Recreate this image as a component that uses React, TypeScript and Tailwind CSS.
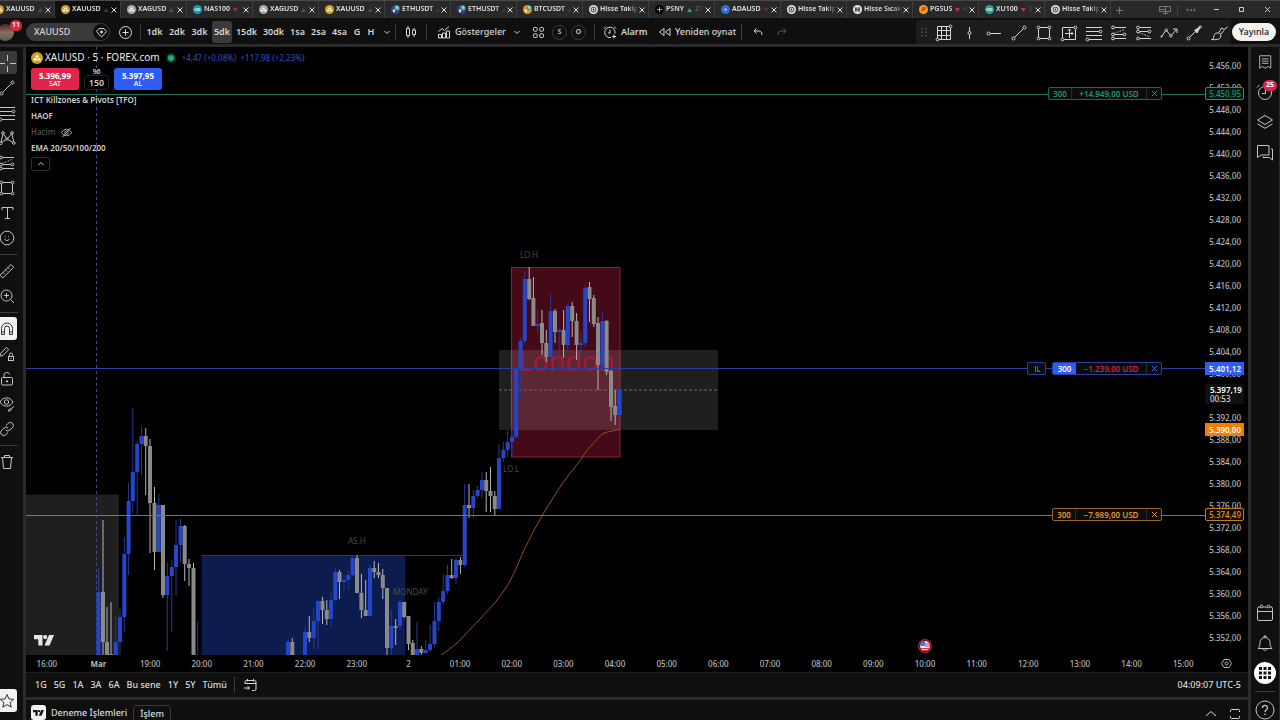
import type { ReactNode } from "react";

type IconProps = { size?: string; box?: string; children: ReactNode };

function Icon({ size = "size-[18px]", box = "0 0 18 18", children }: IconProps) {
  return (
    <svg className={`${size} shrink-0`} viewBox={box} fill="none" stroke="currentColor" strokeWidth="1" aria-hidden="true">
      {children}
    </svg>
  );
}

/* ---------- drawing tool icons ---------- */

const Node = ({ x, y, r = 1.4 }: { x: number; y: number; r?: number }) => <circle cx={x} cy={y} r={r} fill="#161616" />;

const LineIcon = () => (
  <Icon>
    <path d="M4.6 13.4 13.4 4.6" />
    <Node x={3.5} y={14.5} r={1.5} />
    <Node x={14.5} y={3.5} r={1.5} />
  </Icon>
);
const LevelsIcon = () => (
  <Icon>
    <path d="M1 3.500h16M1 7.500h14M1 11.500h16M3 15.500h14" />
    <Node x={15.500} y={7.500} />
    <Node x={2.500} y={15.500} />
  </Icon>
);
const PatternIcon = () => (
  <Icon>
    <path d="M2.800 14 5 4.500l4 5.500 5-5.500 1.800 9.500L9 10z" />
    <Node x={2.800} y={14.300} r={1.300} />
    <Node x={5} y={4} r={1.300} />
    <Node x={14} y={4} r={1.300} />
    <Node x={15.800} y={14} r={1.300} />
    <Node x={9} y={10} r={1.100} />
  </Icon>
);
const ForecastIcon = () => (
  <Icon>
    <path d="M4 3.500h12M4 10.500h9.500M4 14.500h12" />
    <path d="M4 9.500 14 5.500" strokeDasharray="1.5 1.5" />
    <Node x={3} y={3.500} />
    <Node x={3} y={10.500} />
    <Node x={3} y={14.500} />
    <Node x={14.500} y={10.500} />
  </Icon>
);
const ForecastDownIcon = () => (
  <Icon>
    <path d="M4 3.500h12M5 7.500h9M4 14.500h12" />
    <path d="M4 8.500 14 12.500" strokeDasharray="1.5 1.5" />
    <Node x={3} y={3.500} />
    <Node x={3} y={7.500} />
    <Node x={14.500} y={7.500} />
    <Node x={3} y={14.500} />
  </Icon>
);
const RectIcon = () => (
  <Icon>
    <rect x="3.500" y="3.500" width="11" height="11" />
    <Node x={3.500} y={3.500} />
    <Node x={14.500} y={3.500} />
    <Node x={3.500} y={14.500} />
    <Node x={14.500} y={14.500} />
  </Icon>
);
const GridIcon = () => (
  <Icon>
    <path d="M2.500 2.500h13v13h-13zM2.500 6.500h13M2.500 11.500h13M6.500 2.500v13M11.500 2.500v13" />
    <Node x={15.500} y={2.500} />
    <Node x={2.500} y={15.500} />
  </Icon>
);
const VLineIcon = () => (
  <Icon>
    <path d="M9.500 3v4.500M9.500 10.500V15" />
    <Node x={9.500} y={9} r={1.500} />
  </Icon>
);
const HRayIcon = () => (
  <Icon>
    <path d="M5 9.500h11" />
    <Node x={3.500} y={9.500} r={1.500} />
  </Icon>
);
const RangeIcon = () => (
  <Icon>
    <path d="M2.500 3.500h13v12h-13zM9.500 5v9M5 9.500h8M8 6.500 9.500 5 11 6.500M11.500 8l1.500 1.500-1.500 1.500" />
    <Node x={15.500} y={3.500} />
    <Node x={2.500} y={15.500} />
  </Icon>
);
const PolyIcon = () => (
  <Icon>
    <path d="M1.500 12.500 5.500 7M6.800 7l3.500 4M11.500 11l5-5.500M13 5h4v4" />
    <Node x={6.200} y={6.200} r={1.200} />
    <Node x={10.800} y={11.800} r={1.200} />
    <circle cx="1.500" cy="12.500" r="0.600" />
  </Icon>
);
const ArrowIcon = () => (
  <Icon>
    <path d="M4.600 13.400 12 6" />
    <Node x={3.500} y={14.500} r={1.500} />
    <path d="m9.500 6.500 6-4-3.500 6.500z" fill="currentColor" />
    <Node x={15.200} y={3} r={1.100} />
  </Icon>
);
const BrushIcon = () => (
  <Icon>
    <path d="M1.500 15.500c2 0 2-1.500 2.500-4 .5-2 2.500-3 4.500-2.500s3 2.500 2 4.500c-1.300 2.200-4 2.500-9 2z" />
    <path d="M9 8.500 11.500 4l2.500 1.500L17.500 3M10.500 10.500 14 6.500" />
  </Icon>
);
const CrossIcon = () => (
  <Icon>
    <path d="M9.500 1v6M9.500 12v6M1 9.500h6M12 9.500h6" />
  </Icon>
);
const TextIcon = () => (
  <Icon>
    <path d="M4 6V3.500h11V6M9.500 3.500v11M7 14.500h5" />
  </Icon>
);
const SmileIcon = () => (
  <Icon>
    <circle cx="9" cy="9" r="6.800" />
    <path d="M6.800 9.800c.3 2.300 4.100 2.300 4.400 0" />
    <path d="M7 7.500h.6M10.400 7.500h.6" strokeWidth="1.500" />
  </Icon>
);
const RulerIcon = () => (
  <Icon>
    <path d="m2 13.200 11-10.700 2.700 2.700L4.700 16zM5 10.500l1.500 1.500M7.500 8 9 9.500M10 5.500 11.500 7" />
  </Icon>
);
const ZoomIcon = () => (
  <Icon>
    <circle cx="8.500" cy="8.500" r="5.500" />
    <path d="m12.500 12.500 3.500 3.500M8.500 6v5M6 8.500h5" />
  </Icon>
);
const MagnetIcon = () => (
  <Icon>
    <path d="M3.500 14.500v-6a5.500 5.500 0 0 1 11 0v6h-3v-6a2.500 2.500 0 0 0-5 0v6zM3.500 12h3M11.500 12h3" />
  </Icon>
);
const PenLockIcon = () => (
  <Icon>
    <path d="m2 11 .5-2.700 6-5.800 2.200 2L5 10.600zM11.500 11.500v-2a1.500 1.500 0 0 1 3 0v2" />
    <rect x="10.500" y="11.500" width="5" height="4" />
    <path d="M13 13v1" />
  </Icon>
);
const UnlockIcon = () => (
  <Icon>
    <rect x="3.500" y="7.500" width="11" height="7.500" rx="1" />
    <path d="M6 7.500V5a2.800 2.800 0 0 1 5.500-.5" />
    <path d="M9 10.500v1.800" strokeWidth="2" />
  </Icon>
);
const EyeBrushIcon = () => (
  <Icon>
    <path d="M2 7c3-5.500 10-5.500 13 0-3 5.500-10 5.500-13 0z" />
    <circle cx="8.500" cy="7" r="2.200" />
    <path d="M10 16c1 0 1-2.500 2.500-2.500S14 16 10 16zM13.500 13.500l2.500-2" />
  </Icon>
);
const LinkIcon = () => (
  <Icon>
    <path d="m8 5.500 2.300-2.200a2.800 2.800 0 0 1 4.200 4.200L11.800 10a2.800 2.800 0 0 1-4 0M10 12.500l-2.300 2.200a2.800 2.800 0 0 1-4.200-4.200L6.200 8a2.800 2.800 0 0 1 4 0" />
  </Icon>
);
const TrashIcon = () => (
  <Icon>
    <path d="M3 4.500h12M6.500 4.500v-2h5v2M4.500 4.500l1 11h7l1-11" />
  </Icon>
);
const StarIcon = () => (
  <Icon>
    <path d="m9 2.500 1.900 4.400 4.800.4-3.600 3.200 1.100 4.700L9 12.700l-4.200 2.500 1.100-4.700-3.600-3.200 4.800-.4z" />
  </Icon>
);
const Chevron = () => (
  <Icon size="size-2" box="0 0 8 8">
    <path d="m1.500 3 2.500 2.500L6.500 3" />
  </Icon>
);

/* ---------- window tabs ---------- */

type Tab = { title: string; mark: string; trend?: "up" | "down"; extra?: string; glyph: string };

const tabs: Tab[] = [
  { title: "XAUUSD", mark: "bg-[#d4a017]", trend: "up", glyph: "gold" },
  { title: "XAUUSD", mark: "bg-[#d4a017]", trend: "up", glyph: "gold" },
  { title: "XAGUSD", mark: "bg-[#a9a9ad]", trend: "up", glyph: "gold" },
  { title: "NAS100", mark: "bg-[#119bb5]", trend: "down", glyph: "index" },
  { title: "XAGUSD", mark: "bg-[#a9a9ad]", trend: "up", glyph: "gold" },
  { title: "XAUUSD", mark: "bg-[#d4a017]", trend: "up", glyph: "gold" },
  { title: "ETHUSDT", mark: "bg-[#3c3f8c]", trend: "up", glyph: "pair" },
  { title: "ETHUSDT", mark: "bg-[#3c3f8c]", trend: "up", glyph: "pair" },
  { title: "BTCUSDT", mark: "bg-[#f7931a]", trend: "up", glyph: "pair" },
  { title: "Hisse Takip", mark: "bg-[#e6e6e6]", glyph: "ring" },
  { title: "PSNY", mark: "bg-black", trend: "up", extra: "23", glyph: "star" },
  { title: "ADAUSD", mark: "bg-[#2f6fd0]", trend: "down", glyph: "dot" },
  { title: "Hisse Takip", mark: "bg-[#e6e6e6]", glyph: "ring" },
  { title: "Hisse Sıcak", mark: "bg-[#e6e6e6]", glyph: "bars" },
  { title: "PGSUS", mark: "bg-[#f5a11c]", trend: "down", extra: "4", glyph: "flag" },
  { title: "XU100", mark: "bg-[#2b9c9c]", trend: "down", extra: "2", glyph: "index" },
  { title: "Hisse Takip", mark: "bg-[#e6e6e6]", glyph: "ring" },
];

function Glyph({ kind }: { kind: string }) {
  return (
    <svg className="size-full" viewBox="0 0 10 10" fill="none" aria-hidden="true">
      {kind === "gold" && <path d="m1.800 7 1-2h1.700l.7 2zM5.400 7 6 5h1.500l.9 2zM3.500 4.500l.7-1.700h1.700l.7 1.700z" fill="#fff" />}
      {kind === "index" && <path d="M2 3.800v2.400M3.300 3.900h1.500v2.200H3.300zM6 3.900h1.600v2.200H6z" stroke="#fff" strokeWidth="0.700" />}
      {kind === "pair" && (
        <>
          <circle cx="6.800" cy="3" r="3" fill="#3aa78e" />
          <path d="M5.500 2.200h2.800M6.900 2.200v2.500" stroke="#fff" strokeWidth="0.800" />
          <path d="m3.300 4.500 1.400 2-1.400 2-1.400-2z" fill="#fff" />
        </>
      )}
      {kind === "ring" && (
        <>
          <circle cx="5" cy="5" r="2.800" stroke="#222" />
          <circle cx="5" cy="5" r="1" fill="#222" />
        </>
      )}
      {kind === "bars" && <path d="M2.500 3.500h5M2.500 5h5M2.500 6.500h5M3 2.500v5M7 2.500v5" stroke="#222" strokeWidth="0.800" />}
      {kind === "star" && <path d="M5 2v6M2 5h6" stroke="#ddd" strokeWidth="0.800" />}
      {kind === "dot" && <circle cx="5" cy="5" r="1.500" fill="#9fc3f5" />}
      {kind === "flag" && <path d="m3.200 7.500 1-4.500h2.600l-.6 2.200H4.500" stroke="#c8202f" strokeWidth="1.200" />}
    </svg>
  );
}

function TabBar() {
  return (
    <header className="flex h-[18px] shrink-0 border-t border-[#484848] bg-[#292929] text-[7px] text-[#e0e0e0]">
      <nav className="-ml-[11px] flex" aria-label="Sekmeler">
        {tabs.map((t, i) => (
          <div
            key={i}
            className={`flex w-[66px] items-center border-r border-[#3d3d3d] pl-[6px] ${i === 1 ? "bg-[#0f0f0f]" : ""}`}
          >
            <span className={`size-[9px] shrink-0 overflow-hidden rounded-full ${t.mark}`}>
              <Glyph kind={t.glyph} />
            </span>
            <span className="ml-[2px] flex w-[37px] items-center font-semibold whitespace-nowrap [mask-image:linear-gradient(to_right,black_75%,transparent_105%)]">
              {t.title}
              {t.trend && (
                <svg
                  className={`ml-[3px] h-1 w-[5px] shrink-0 ${t.trend === "up" ? "text-[#22ab7a]" : "text-[#e0244c]"}`}
                  viewBox="0 0 5 4"
                  fill="currentColor"
                  aria-hidden="true"
                >
                  <path d={t.trend === "up" ? "M0 4h5L2.500 0z" : "M0 0h5L2.500 4z"} />
                </svg>
              )}
              {t.extra && <span className="ml-[3px] font-normal text-[#999]">{t.extra}</span>}
            </span>
            <button className="ml-[1px] flex" aria-label="Kapat">
              <Icon size="size-2" box="0 0 8 8">
                <path d="m1.500 1.500 5 5M6.500 1.500l-5 5" />
              </Icon>
            </button>
          </div>
        ))}
      </nav>
      <button className="flex w-4 items-center justify-center text-[#777]" aria-label="Yeni sekme">
        <Icon size="size-2" box="0 0 8 8">
          <path d="M4.500 1v7M1 4.500h7" />
        </Icon>
      </button>
      <div className="ml-auto flex items-center text-[#777]">
        <button className="flex w-[25px] justify-center border-r border-[#444]" aria-label="Düzen">
          <Icon size="h-[10px] w-3" box="0 0 12 10">
            <path d="M.5 1.500h11v5H.5zM6.500 1.500v8M4 8.500h5M.5 4.500h6" />
          </Icon>
        </button>
        <button className="flex w-[26px] justify-center" aria-label="Menü">
          <Icon size="h-1 w-[10px]" box="0 0 10 4">
            <circle cx="1.500" cy="2" r="0.800" />
            <circle cx="5" cy="2" r="0.800" />
            <circle cx="8.500" cy="2" r="0.800" />
          </Icon>
        </button>
        <button className="flex w-[25px] justify-center text-[#ccc]" aria-label="Küçült">
          <Icon size="size-[7px]" box="0 0 7 7">
            <path d="M1 3.500h5" />
          </Icon>
        </button>
        <button className="flex w-[25px] justify-center text-[#ccc]" aria-label="Büyüt">
          <Icon size="size-[7px]" box="0 0 7 7">
            <path d="M1.500 1.500h4v4h-4z" />
          </Icon>
        </button>
        <button className="flex w-[26px] justify-center text-[#ccc]" aria-label="Pencereyi kapat">
          <Icon size="size-[7px]" box="0 0 7 7">
            <path d="m1 1 5 5M6 1 1 6" />
          </Icon>
        </button>
      </div>
    </header>
  );
}

/* ---------- top toolbar ---------- */

const intervals: [string, string][] = [
  ["1dk", "w-[23px]"],
  ["2dk", "w-[22px]"],
  ["3dk", "w-[23px]"],
  ["5dk", "w-5 mx-[1px]"],
  ["15dk", "w-[27px]"],
  ["30dk", "w-[27px]"],
  ["1sa", "w-[21px]"],
  ["2sa", "w-[21px]"],
  ["4sa", "w-[21px]"],
  ["G", "w-[14px]"],
  ["H", "w-[14px]"],
];

const Sep = () => <span className="h-4 w-px shrink-0 bg-[#3d3d3d]" />;

const stripIcons: [string, () => ReactNode][] = [
  ["Izgara", GridIcon],
  ["Dikey çizgi", VLineIcon],
  ["Yatay ışın", HRayIcon],
  ["Trend çizgisi", LineIcon],
  ["Dikdörtgen", RectIcon],
  ["Fiyat aralığı", RangeIcon],
  ["Seviyeler", LevelsIcon],
  ["Uzun pozisyon", ForecastIcon],
  ["Kısa pozisyon", ForecastDownIcon],
  ["Yol", PolyIcon],
  ["Ok", ArrowIcon],
  ["Fırça", BrushIcon],
];

function Toolbar() {
  return (
    <div className="flex h-[29px] shrink-0 items-center border-b-[3px] border-[#2b2b2b] bg-[#0f0f0f] pt-[2px] text-[9px] font-semibold text-[#d6d6d6]">
      <div className="relative h-full w-[26px] shrink-0">
        <span className="absolute top-[4px] -left-[3px] size-[17px] rounded-full bg-gradient-to-b from-[#3d2a26] via-[#8f6b60] to-[#53605a]" />
        <span className="absolute top-0 left-[10px] flex h-[11px] w-3 items-center justify-center rounded-full bg-[#e0244c] text-[7px] text-white">
          11
        </span>
      </div>
      <button className="flex h-[18px] w-[84px] shrink-0 items-center justify-between rounded-full bg-[#3a3a3a] pr-[1px] pl-2">
        <span className="font-medium">XAUUSD</span>
        <span className="flex size-4 items-center justify-center rounded-full bg-[#0f0f0f]">
          <Icon size="size-[11px]" box="0 0 11 11">
            <path d="M3 1.500h5l2.500 3-5 5.500-5-5.500z" />
            <path d="M5.500 3.500v3M4 5h3" strokeWidth="1.300" />
          </Icon>
        </span>
      </button>
      <button className="flex w-[30px] shrink-0 justify-center" aria-label="Sembol ekle">
        <Icon size="size-[13px]" box="0 0 13 13">
          <circle cx="6.500" cy="6.500" r="6" />
          <path d="M6.500 3.500v6M3.500 6.500h6" />
        </Icon>
      </button>
      <Sep />
      <div className="ml-[2px] flex shrink-0 items-center">
        {intervals.map(([label, width]) => (
          <button
            key={label}
            className={`flex h-[22px] items-center justify-center rounded-[3px] ${width} ${label === "5dk" ? "bg-[#3a3a3a]" : ""}`}
          >
            {label}
          </button>
        ))}
      </div>
      <button className="flex w-[17px] shrink-0 justify-center" aria-label="Diğer aralıklar">
        <Chevron />
      </button>
      <Sep />
      <button className="flex w-[30px] shrink-0 justify-center" aria-label="Mum grafiği">
        <Icon size="size-[14px]" box="0 0 14 14">
          <path d="M2.500 3.500h3v7h-3zM4 1v2.500M4 10.500V13M8.500 5h3v4.500h-3zM10 3v2M10 9.500V12" />
        </Icon>
      </button>
      <Sep />
      <button className="ml-[10px] flex w-[70px] shrink-0 items-center gap-1">
        <Icon size="size-[14px]" box="0 0 14 14">
          <path d="M1.500 13V9.500h3V13zM5.500 13V8h3v5zM9.500 13V6h3v7zM1.500 6.500 5 3.500l2.500 2L12 1.500" />
        </Icon>
        <span className="font-medium">Göstergeler</span>
      </button>
      <button className="flex w-[20px] shrink-0 justify-center" aria-label="Favori göstergeler">
        <Chevron />
      </button>
      <button className="flex w-[23px] shrink-0 justify-center" aria-label="Şablonlar">
        <Icon size="size-[13px]" box="0 0 13 13">
          <rect x="1.500" y="1.500" width="3.700" height="3.700" rx="1" />
          <rect x="7.800" y="1.500" width="3.700" height="3.700" rx="1" />
          <rect x="1.500" y="7.800" width="3.700" height="3.700" rx="1" />
          <rect x="7.800" y="7.800" width="3.700" height="3.700" rx="1" />
        </Icon>
      </button>
      <div className="ml-[2px] flex shrink-0 gap-1">
        {["S", "O"].map((s) => (
          <button key={s} className="flex size-[15px] items-center justify-center rounded-full border border-[#3d3d3d] text-[7px]">
            {s}
          </button>
        ))}
      </div>
      <span className="w-2" />
      <Sep />
      <button className="ml-2 flex w-[55px] shrink-0 items-center gap-1">
        <Icon size="size-[14px]" box="0 0 14 14">
          <path d="M12 8.500A5.200 5.200 0 1 0 8 12.500M7 4.500V8H5M1 3.500 3 1.500M11 1.500l2 2M11 9.500v4M9 11.500h4" />
        </Icon>
        Alarm
      </button>
      <button className="flex w-[83px] shrink-0 items-center gap-1">
        <Icon size="h-[10px] w-[13px]" box="0 0 13 10">
          <path d="M6 1.500v7L1.500 5zM12 1.500v7L7.500 5z" />
        </Icon>
        <span className="font-medium whitespace-nowrap">Yeniden oynat</span>
      </button>
      <Sep />
      <button className="ml-2 flex w-4 shrink-0 justify-center" aria-label="Geri al">
        <Icon size="size-[10px]" box="0 0 10 10">
          <path d="M3.500 1.500 1 4l2.500 2.500M1 4h5c2 0 3 1.500 3 4" />
        </Icon>
      </button>
      <button className="ml-2 flex w-4 shrink-0 justify-center text-[#5a5a5a]" aria-label="Yinele">
        <Icon size="size-[10px]" box="0 0 10 10">
          <path d="M6.500 1.500 9 4 6.500 6.500M9 4H4C2 4 1 5.500 1 8" />
        </Icon>
      </button>
      <div className="ml-auto flex h-full shrink-0 items-center bg-[#1c1c1c] pt-[2px]">
        <span className="flex w-[15px] justify-center text-[#555]">
          <Icon size="h-3 w-2" box="0 0 8 12">
            <path d="M2 1v10M6 1v10" strokeWidth="1.500" strokeDasharray="1.5 2" />
          </Icon>
        </span>
        {stripIcons.map(([name, Glyph]) => (
          <button key={name} className="flex w-[25px] justify-center" aria-label={name}>
            <Glyph />
          </button>
        ))}
      </div>
      <button className="mr-1 ml-[1px] h-[18px] w-11 shrink-0 rounded-full bg-[#f2f2f2] text-center text-[9px] font-medium text-[#1c1c1c]">
        Yayınla
      </button>
    </div>
  );
}

/* ---------- side bars ---------- */

type Tool = [string, () => ReactNode];

const toolGroups: Tool[][] = [
  [
    ["İmleç", CrossIcon],
    ["Trend çizgisi", LineIcon],
    ["Fibonacci", LevelsIcon],
    ["Formasyonlar", PatternIcon],
    ["Tahmin", ForecastIcon],
    ["Şekiller", RectIcon],
    ["Metin", TextIcon],
    ["İkonlar", SmileIcon],
  ],
  [
    ["Ölç", RulerIcon],
    ["Yakınlaştır", ZoomIcon],
  ],
  [
    ["Mıknatıs", MagnetIcon],
    ["Çizim modu", PenLockIcon],
    ["Kilitle", UnlockIcon],
    ["Gizle", EyeBrushIcon],
    ["Bağla", LinkIcon],
  ],
  [["Sil", TrashIcon]],
];

function ToolColumn() {
  return (
    <aside className="flex w-[26px] shrink-0 flex-col overflow-hidden border-r-[3px] border-[#2b2b2b] bg-[#0f0f0f] pt-[3px] text-[#c4c4c4]">
      {toolGroups.map((group, g) => (
        <div key={g} className={g > 0 ? "mt-1 mr-[5px] border-t border-[#3d3d3d] pt-[3px]" : ""}>
          {group.map(([name, Glyph]) => (
            <button key={name} className="flex h-[25px] items-center" aria-label={name}>
              <span
                className={`-ml-1 flex h-[23px] w-[21px] items-center justify-center rounded-[3px] ${
                  name === "İmleç" ? "bg-[#3a3a3a]" : name === "Mıknatıs" ? "bg-[#f2f2f2] text-[#333]" : ""
                }`}
              >
                <Glyph />
              </span>
            </button>
          ))}
        </div>
      ))}
      <button
        className="mt-auto mb-2 -ml-1 flex h-[23px] w-[21px] items-center justify-center rounded-[3px] bg-[#f2f2f2] text-[#333]"
        aria-label="Favoriler"
      >
        <StarIcon />
      </button>
    </aside>
  );
}

function RightColumn() {
  const cell = "flex h-[30px] w-full items-center justify-center";
  return (
    <aside className="flex w-8 shrink-0 flex-col border-r border-l-[3px] border-[#2b2b2b] bg-[#0f0f0f] text-[#c4c4c4]">
      <button className={cell} aria-label="İzleme listesi">
        <Icon size="size-4">
          <path d="M3 2h12.500v14l-3-2-3.200 2-3.300-2L3 16zM5.500 5.500h7.500M5.500 8h7.500M5.500 10.500h7.500" />
        </Icon>
      </button>
      <button className={`${cell} relative`} aria-label="Alarmlar">
        <Icon>
          <circle cx="9" cy="10" r="6.500" />
          <path d="M9.500 6v4.500H6M1 4.500 3.500 2" />
        </Icon>
        <span className="absolute top-[3px] right-[2px] flex h-[11px] w-[14px] items-center justify-center rounded-full bg-[#e0244c] text-[7px] font-bold text-white">
          25
        </span>
      </button>
      <button className={cell} aria-label="Veri penceresi">
        <Icon>
          <path d="m1.500 7 7.500-4.500L16.500 7 9 11.500zM1.500 10.800 9 15.300l7.500-4.500" />
        </Icon>
      </button>
      <button className={cell} aria-label="Sohbet">
        <Icon>
          <path d="M1.500 2.500h11.500v9.500H5l-3.500 2.500zM15 6h1.500v11l-3-2.500H7v-1" />
        </Icon>
      </button>
      <button className={`${cell} mt-auto`} aria-label="Takvim">
        <Icon>
          <rect x="1.500" y="3" width="15" height="13.500" rx="1.500" />
          <path d="M1.500 7.500h15" />
          <circle cx="5.500" cy="2.500" r="1.300" fill="#0f0f0f" />
          <circle cx="12.500" cy="2.500" r="1.300" fill="#0f0f0f" />
        </Icon>
      </button>
      <button className={cell} aria-label="Bildirimler">
        <Icon>
          <path d="M2 14.500c1.500-1.500 2-3 2-6a5 5 0 0 1 10 0c0 3 .5 4.500 2 6zM8 3.500V2h2v1.500M7 14.500c0 2.500 4 2.500 4 0" />
        </Icon>
      </button>
      <button className={cell} aria-label="Ürünler">
        <span className="flex size-[22px] items-center justify-center rounded-full bg-white">
          <svg className="size-3" viewBox="0 0 12 12" aria-hidden="true">
            <path d="M0 0h3v3H0zM4.500 0h3v3h-3zM9 0h3v3H9zM0 4.500h3v3H0zM4.500 4.500h3v3h-3zM9 4.500h3v3H9zM0 9h3v3H0zM4.500 9h3v3h-3zM9 9h3v3H9z" fill="#111" />
          </svg>
        </span>
      </button>
      <div className="mx-1 mt-[3px] flex justify-center border-t border-[#3d3d3d] pt-2">
        <button aria-label="Yardım">
          <Icon size="size-5" box="0 0 20 20">
            <circle cx="10" cy="10" r="9" />
            <path d="M7.500 8c0-3.500 5-3.300 5-.3 0 2-2.500 2-2.500 4.300M10 13.500V15" strokeWidth="1.300" />
          </Icon>
        </button>
      </div>
    </aside>
  );
}

/* ---------- chart ---------- */

// x, high, low, body top, body bottom, direction (1 up, 0 down)
const candles: number[][] = [
  [98.5, 568, 655, 592, 655, 1], [103, 520, 655, 592, 642, 0], [107, 607, 655, 642, 655, 0], [111, 602, 655, 654, 655, 0],
  [115.7, 616, 655, 642, 655, 1], [120, 609, 655, 617, 642, 1], [124.3, 537, 632, 554, 617, 1], [128.6, 483, 575, 501, 554, 1],
  [132.8, 408, 513, 472, 501, 1], [137.2, 441, 514, 444, 472, 1], [141.5, 427, 475, 436, 444, 1], [145.7, 428, 495, 436, 446, 0],
  [150, 439, 553, 446, 503, 0], [154.5, 487, 570, 503, 552, 0], [158.8, 494, 552, 505, 552, 1], [163, 505, 598, 505, 595, 0],
  [167.3, 563, 651, 576, 595, 1], [171.8, 560, 632, 567, 576, 1], [176, 520, 596, 545, 567, 1], [180.5, 519, 562, 526, 545, 1],
  [184.7, 525, 581, 526, 564, 0], [189, 559, 586, 564, 568, 0], [193.5, 563, 655, 568, 655, 0], [197.7, 621, 655, 655, 655, 1],
  [288, 640, 655, 642, 655, 1], [292.3, 638, 655, 642, 655, 0], [305, 627, 655, 632, 655, 1], [309.3, 616, 642, 632, 638, 0],
  [313.8, 608, 649, 621, 638, 1], [318, 599, 650, 601, 621, 1], [322.5, 597, 624, 601, 610, 0], [326.8, 600, 625, 610, 619, 0],
  [331, 593, 627, 600, 619, 1], [335.3, 568, 601, 572, 600, 1], [339.5, 570, 599, 572, 582, 0], [344, 575, 590, 580, 582, 1],
  [348.3, 571, 590, 575, 580, 1], [352.7, 556, 576, 558, 575, 1], [357, 555, 593, 558, 593, 0], [361.4, 574, 618, 593, 610, 0],
  [365.7, 580, 616, 610, 616, 0], [370, 565, 616, 568, 616, 1], [374.2, 561, 578, 568, 572, 0], [378.5, 563, 578, 572, 575, 0],
  [382.8, 569, 599, 575, 588, 0], [387, 588, 655, 588, 648, 0], [391.3, 610, 655, 626, 648, 1], [395.7, 619, 645, 626, 628, 0],
  [400, 600, 630, 602, 626, 1], [404.2, 602, 618, 602, 617, 0], [408.5, 616, 650, 616, 644, 0], [412.8, 640, 655, 643, 655, 0],
  [417, 622, 655, 649, 655, 1], [421.3, 646, 655, 649, 653, 0], [425.7, 640, 654, 650, 653, 1], [430, 625, 652, 644, 650, 1],
  [434.5, 602, 647, 621, 644, 1], [438.8, 597, 631, 602, 621, 1], [443.2, 574, 605, 591, 602, 1], [447.5, 565, 594, 575, 591, 1],
  [451.7, 559, 579, 575, 578, 0], [456, 558, 584, 560, 578, 1], [460.4, 557, 574, 560, 565, 0], [464.7, 484, 567, 505, 565, 1],
  [469, 484, 518, 505, 508, 0], [473.3, 490, 518, 496, 508, 1], [477.6, 486, 498, 490, 496, 1], [482, 472, 498, 480, 490, 1],
  [486.2, 472, 512, 480, 491, 0], [490.5, 467, 512, 491, 496, 0], [494.8, 491, 515, 496, 509, 0], [499, 444, 509, 458, 509, 1],
  [503.4, 442, 462, 450, 458, 1], [507.7, 430, 457, 442, 450, 1], [512, 426, 456, 437, 442, 1], [516.2, 367, 438, 368, 437, 1],
  [520.5, 338, 397, 341, 369, 1], [524.8, 271, 345, 279, 341, 1], [529.2, 267, 300, 279, 299, 0], [533.4, 277, 326, 298, 326, 0],
  [537.7, 310, 333, 324, 326, 1], [542, 310, 355, 323, 343, 0], [546.3, 330, 362, 343, 357, 0], [550.6, 294, 358, 311, 357, 1],
  [555, 309, 343, 311, 332, 0], [559.3, 328, 363, 330, 332, 1], [563.6, 310, 358, 330, 345, 0], [567.8, 304, 352, 306, 345, 1],
  [572.2, 302, 337, 306, 321, 0], [576.6, 313, 360, 321, 345, 0], [581, 333, 360, 343, 345, 1], [585.2, 285, 347, 288, 343, 1],
  [589.5, 282, 322, 287, 299, 0], [593.8, 295, 327, 298, 324, 0], [598, 317, 390, 323, 365, 0], [602.4, 312, 370, 321, 365, 1],
  [606.6, 320, 375, 321, 372, 0], [611, 370, 421, 371, 407, 0], [615.2, 390, 425, 406, 415, 0], [619.6, 372, 416, 390, 415, 1],
];

function ChartCanvas() {
  return (
    <svg className="absolute inset-0 size-full" role="img" aria-label="XAUUSD 5 dakikalık mum grafiği">
      <g transform="translate(-26 -47)">
        <rect x="26" y="494.500" width="93" height="200" fill="#1f1f1f" />
        <rect x="201.500" y="555" width="203.500" height="140" fill="#0c1c4e" />
        <path d="M201.500 555.500h262" stroke="#20398f" />
        <rect x="511.500" y="267.500" width="108.500" height="189.500" fill="#450a17" stroke="#8e1c33" />
        <rect x="499" y="350" width="219" height="80" fill="#fff" fillOpacity="0.120" />
        <text x="518" y="371" fontSize="27" fill="#a81836">London</text>
        <path d="M499 390h219" stroke="#6a6a6a" strokeDasharray="3 2" />
        <path d="M96.500 47v650" stroke="#3d4690" strokeDasharray="3 3" />
        {candles.map(([x, high, low, top, bottom, up]) => (
          <g key={x} fill={up ? "#2546cc" : "#8a8a8a"}>
            <rect x={x - 0.5} y={high} width="1" height={low - high} fill={up ? "#2a3796" : "#b4b4b4"} />
            <rect x={x - 2} y={top} width="4" height={Math.max(bottom - top, 1)} />
          </g>
        ))}
        <path
          d="M441 655C447 651 453 647 459 641C466 634 473 626 480 619C486 612 492 607 497 600C503 592 508 586 512 577C517 568 520 558 525 548C530 538 535 528 542 516C549 504 557 491 565 480C571 472 576 466 582 458C585 453 587 450 590 447C596 441 599 436 604 433C609 431 615 431 620 429"
          fill="none"
          stroke="#94502a"
        />
        <g fontSize="8" fill="#4a4a4a">
          <text x="520" y="258">LO.H</text>
          <text x="503" y="472">LO.L</text>
          <text x="348" y="544">AS.H</text>
          <text x="393" y="595">MONDAY</text>
        </g>
      </g>
      <line x1="0" x2="100%" y1="47.500" y2="47.500" stroke="#1f7558" />
      <line x1="0" x2="100%" y1="321.500" y2="321.500" stroke="#2a3fa6" />
      <line x1="0" x2="100%" y1="468.500" y2="468.500" stroke="#a86a22" />
    </svg>
  );
}

type OrderProps = { tone: string; line: string; place: string; amount: string; amountTone?: string; filled?: boolean };

function OrderTag({ tone, line, place, amount, amountTone = "", filled }: OrderProps) {
  return (
    <div
      className={`absolute right-[43px] flex h-[13px] items-stretch overflow-hidden rounded-[2px] border bg-[#0b0d0d] text-[8px] leading-[11px] font-semibold ${tone} ${line} ${place}`}
    >
      <span className={`flex w-[23px] items-center justify-center ${filled ? "bg-[#2f5cf5] text-white" : "border-r border-[#2a2a2a]"}`}>300</span>
      <span className={`flex flex-1 items-center justify-center ${amountTone}`}>{amount}</span>
      <button className="flex w-[15px] items-center justify-center border-l border-[#2a2a2a]" aria-label="Emri kapat">
        <Icon size="size-[7px]" box="0 0 7 7">
          <path d="m1 1 5 5M6 1 1 6" />
        </Icon>
      </button>
    </div>
  );
}

const prices = Array.from({ length: 27 }, (_, i) => `5.${456 - i * 4},00`);

function PriceAxis() {
  const tag = "absolute left-0 flex h-[13px] w-[39px] items-center justify-end";
  return (
    <div className="relative w-[43px] shrink-0 overflow-hidden pt-2 text-[8px] font-medium text-[#b8b8b8]">
      {prices.map((p) => (
        <div key={p} className="h-[22px] pr-[7px] text-right leading-[22px]">
          {p}
        </div>
      ))}
      <span className={`${tag} top-[40px] rounded-[2px] border border-[#22946f] bg-[#04140f] pr-[2px] text-[#22946f]`}>5.450,95</span>
      <span className={`${tag} top-[315px] bg-[#2f5cf5] pr-[3px] font-semibold text-white`}>5.401,12</span>
      <span className="absolute top-[337px] left-0 w-[39px] bg-[#101010] py-[1px] pl-[5px] leading-[9px] text-[#d6d6d6]">
        <span className="block font-semibold text-white">5.397,19</span>
        00:53
      </span>
      <span className={`${tag} top-[376px] bg-[#f57c00] pr-[3px] font-semibold text-white`}>5.390,00</span>
      <span className={`${tag} top-[461px] rounded-[2px] border border-[#c77d1e] bg-[#120b03] pr-[2px] text-[#e8942a]`}>5.374,49</span>
    </div>
  );
}

function Legend() {
  return (
    <div className="relative flex flex-col items-start pt-[4px] pl-[5px] text-[8px] font-semibold text-[#d0d0d0]">
      <div className="flex h-[13px] items-center">
        <span className="mr-[2px] size-3 overflow-hidden rounded-full bg-[#d4a017]">
          <Glyph kind="gold" />
        </span>
        <h1 className="text-[10px] font-normal whitespace-nowrap text-[#ececec]">XAUUSD · 5 · FOREX.com</h1>
        <span className="mr-2 ml-2 size-[6px] rounded-full bg-[#22ab7a] ring-2 ring-[#0b3a2a]" />
        <span className="flex gap-1 font-medium whitespace-nowrap text-[#2b46b8]">
          <span>+4,47 (+0,08%)</span>
          <span>+117,98 (+2,23%)</span>
        </span>
      </div>
      <div className="mt-1 flex">
        <button className="h-[22px] w-12 rounded-[3px] bg-[#e0244c] leading-[9px] font-bold text-white">
          5.396,99
          <span className="block text-[7px] leading-[8px] font-medium">SAT</span>
        </button>
        <div className="mx-[5px] flex w-[25px] flex-col items-center">
          <span className="text-[7px] leading-[7px]">96</span>
          <span className="w-full rounded-[3px] border border-[#222] bg-black text-center text-[9px] leading-[13px]">150</span>
        </div>
        <button className="h-[22px] w-12 rounded-[3px] bg-[#2f5cf5] leading-[9px] font-bold text-white">
          5.397,95
          <span className="block text-[7px] leading-[8px] font-medium">AL</span>
        </button>
      </div>
      <ul className="mt-[2px] leading-4">
        <li>ICT Killzones &amp; Pivots [TFO]</li>
        <li>HAOF</li>
        <li className="flex items-center gap-[6px] font-medium text-[#555]">
          Hacim
          <span className="text-[#b0b0b0]">
            <Icon size="size-[11px]" box="0 0 11 11">
              <path d="M.5 5.500c2.500-4.300 7.500-4.300 10 0-2.500 4.300-7.500 4.300-10 0z" />
              <circle cx="5.500" cy="5.500" r="1.700" />
              <path d="M9.500 1 1.500 10" />
            </Icon>
          </span>
        </li>
        <li>EMA 20/50/100/200</li>
      </ul>
      <button className="mt-[1px] flex h-[14px] w-[19px] items-center justify-center rounded-[2px] border border-[#2e2e2e]" aria-label="Göstergeleri daralt">
        <Icon size="size-2" box="0 0 8 8">
          <path d="M1.500 5 4 2.500 6.500 5" />
        </Icon>
      </button>
    </div>
  );
}

const TvLogo = ({ size }: { size: string }) => (
  <svg className={size} viewBox="0 0 20 11" fill="currentColor" aria-hidden="true">
    <path d="M0 0h8.500v10.500H4.300V4.200H0z" />
    <circle cx="11.200" cy="2.100" r="2.100" />
    <path d="M15 0h5l-4.500 10.500h-5z" />
  </svg>
);

const times = ["16:00", "Mar", "19:00", "20:00", "21:00", "22:00", "23:00", "2"].concat(
  Array.from({ length: 15 }, (_, i) => `${String(i + 1).padStart(2, "0")}:00`),
);

function Chart() {
  return (
    <main className="flex min-w-0 flex-1 flex-col bg-black">
      <div className="flex min-h-0 flex-1">
        <section className="relative min-w-0 flex-1 overflow-hidden">
          <ChartCanvas />
          <Legend />
          <OrderTag tone="text-[#22946f]" line="border-[#176b50]" place="top-[40px] w-[114px]" amount="+14.949,00 USD" />
          <span className="absolute top-[315px] right-[159px] flex h-[13px] w-[19px] items-center justify-center rounded-[2px] border border-[#2a3fa6] bg-[#0b0d0d] text-[#3f5fd0]">
            <Icon size="size-2" box="0 0 8 8">
              <path d="M1.500 2.500 2.500 1.500V7M4.500 1v5.500h2.500M5.500 5 7 6.500" />
            </Icon>
          </span>
          <OrderTag
            tone="text-[#4468e8]"
            line="border-[#2a3fa6]"
            place="top-[315px] w-[110px]"
            amount="−1.239,00 USD"
            amountTone="text-[#c8203f]"
            filled
          />
          <OrderTag tone="text-[#e8942a]" line="border-[#9c6420]" place="top-[461px] w-[110px]" amount="−7.989,00 USD" />
          <span className="absolute bottom-[9px] left-2 text-[#e6e6e6]">
            <TvLogo size="h-[11px] w-5" />
          </span>
          <span className="absolute bottom-[2px] left-[892px]">
            <svg className="size-[14px]" viewBox="0 0 14 14" aria-hidden="true">
              <circle cx="7" cy="7" r="6.300" fill="#1a0a10" stroke="#c2203f" strokeWidth="1.200" />
              <circle cx="7" cy="7" r="5" fill="#e8e8ec" />
              <path d="M7 5h4.500M7 7h5M3 9.500h8M4.500 11.500h5" stroke="#d33a4a" strokeWidth="1" />
              <path d="M2 7a5 5 0 0 1 5-5v5z" fill="#3d7ed8" />
            </svg>
          </span>
        </section>
        <PriceAxis />
      </div>
      <div className="flex h-[17px] shrink-0 items-center overflow-hidden text-[8px] font-medium text-[#b8b8b8]">
        <div className="-ml-[5px] flex flex-1">
          {times.map((t) => (
            <span key={t} className={`flex-1 text-center ${t === "Mar" ? "font-bold" : ""}`}>
              {t}
            </span>
          ))}
        </div>
        <button className="flex w-[39px] justify-center pr-1" aria-label="Eksen ayarları">
          <Icon size="size-[11px]" box="0 0 11 11">
            <path d="M3 1.500h5l2.500 4-2.500 4H3l-2.500-4z" />
            <circle cx="5.500" cy="5.500" r="1.500" />
          </Icon>
        </button>
      </div>
      <div className="flex h-[25px] shrink-0 items-center gap-[7px] border-t border-[#1f1f1f] bg-[#0f0f0f] pr-[7px] pl-[9px] text-[9px] font-medium text-[#dcdcdc]">
        {["1G", "5G", "1A", "3A", "6A", "Bu sene", "1Y", "5Y", "Tümü"].map((r) => (
          <button key={r} className="whitespace-nowrap">
            {r}
          </button>
        ))}
        <Sep />
        <button className="ml-[1px]" aria-label="Tarihe git">
          <Icon size="size-[14px]" box="0 0 14 14">
            <path d="M2 5.500V4a1.500 1.500 0 0 1 1.500-1.500h8A1.500 1.500 0 0 1 13 4v7a1.500 1.500 0 0 1-1.500 1.500H9M2 5.500h11M4.500 1v2.500M10.500 1v2.500M1 10h5.500M4.500 8l2 2-2 2" />
          </Icon>
        </button>
        <button className="ml-auto">04:09:07 UTC-5</button>
      </div>
      <footer className="flex h-[23px] shrink-0 items-start border-t-[3px] border-[#2b2b2b] bg-[#0f0f0f] pt-[5px] pl-[5px] text-[9px] font-medium text-[#dcdcdc]">
        <span className="flex size-[15px] items-center justify-center rounded-[3px] bg-[#f2f2f2] text-[#111]">
          <TvLogo size="h-[6px] w-[11px]" />
        </span>
        <button className="ml-[5px] h-4 whitespace-nowrap">Deneme İşlemleri</button>
        <button className="ml-[6px] h-[17px] w-[38px] rounded-[3px] border border-[#3a3a3a]">İşlem</button>
        <div className="mt-[3px] mr-[7px] ml-auto flex gap-3">
          <button aria-label="Paneli aç">
            <Icon size="size-3" box="0 0 12 12">
              <path d="m1 8 5-4.500L11 8" />
            </Icon>
          </button>
          <button aria-label="Paneli büyüt">
            <Icon size="size-3" box="0 0 12 12">
              <path d="M1.500 4V2.500a1 1 0 0 1 1-1h7a1 1 0 0 1 1 1V4M1.500 8v1.500a1 1 0 0 0 1 1h7a1 1 0 0 0 1-1V8" />
            </Icon>
          </button>
        </div>
      </footer>
    </main>
  );
}

export default function App() {
  return (
    <div className="flex h-screen w-full flex-col overflow-hidden bg-[#0f0f0f] font-['Noto_Sans','Open_Sans',sans-serif]">
      <TabBar />
      <Toolbar />
      <div className="flex min-h-0 flex-1">
        <ToolColumn />
        <Chart />
        <RightColumn />
      </div>
    </div>
  );
}
